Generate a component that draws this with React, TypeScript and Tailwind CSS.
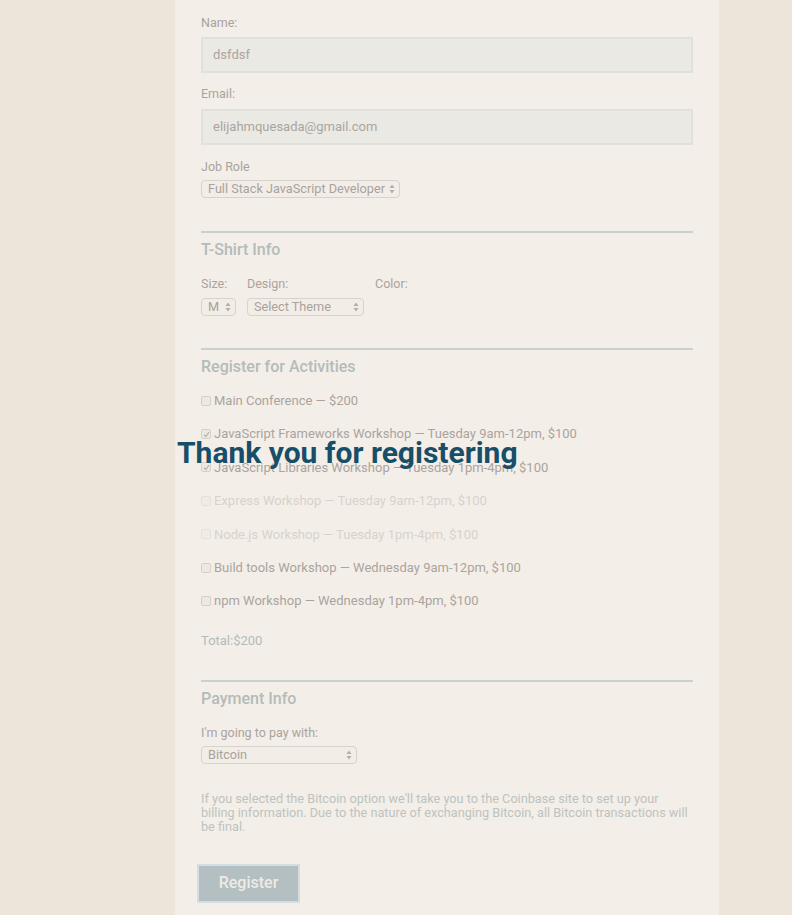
import React from "react";

const Arrows = () => (
  <svg width="6" height="10" viewBox="0 0 6 10" className="shrink-0">
    <path d="M3 0.5 L5.5 4 H0.5 Z" fill="#b5aea8" />
    <path d="M3 9.5 L5.5 6 H0.5 Z" fill="#b5aea8" />
  </svg>
);

const FakeSelect = ({ value, width }: { value: string; width: string }) => (
  <div
    className={`${width} h-[18px] flex items-center justify-between pl-[6px] pr-[4px] rounded-[4px] border border-[#d8d2cc] bg-[#f3ede7] text-[12.7px] text-[#a8a29d] leading-[16px] overflow-hidden`}
  >
    <span className="whitespace-nowrap">{value}</span>
    <Arrows />
  </div>
);

const Checkbox = ({ checked, faded }: { checked?: boolean; faded?: boolean }) => (
  <span
    className={`w-[10px] h-[10px] rounded-[2px] border flex items-center justify-center shrink-0 ${
      faded ? "border-[#e6e0da] bg-[#f1ebe5]" : "border-[#d6d0ca] bg-[#eee8e2]"
    }`}
  >
    {checked && (
      <svg width="7" height="7" viewBox="0 0 7 7">
        <path d="M1 3.8 L2.8 5.5 L6 1.2" stroke="#b8b2ad" strokeWidth="1.2" fill="none" />
      </svg>
    )}
  </span>
);

const activities = [
  { label: "Main Conference — $200" },
  { label: "JavaScript Frameworks Workshop — Tuesday 9am-12pm, $100", checked: true },
  { label: "JavaScript Libraries Workshop — Tuesday 1pm-4pm, $100", checked: true },
  { label: "Express Workshop — Tuesday 9am-12pm, $100", faded: true },
  { label: "Node.js Workshop — Tuesday 1pm-4pm, $100", faded: true },
  { label: "Build tools Workshop — Wednesday 9am-12pm, $100" },
  { label: "npm Workshop — Wednesday 1pm-4pm, $100" },
];

const SectionTitle = ({ children }: { children: React.ReactNode }) => (
  <div className="border-t-2 border-[#ccd0cc] pt-[7px]">
    <h2 className="text-[16px] leading-[20px] font-medium text-[#b2bcba]">{children}</h2>
  </div>
);

export default function App() {
  return (
    <div
      className="min-h-[915px] bg-[#ede5da] flex pl-[175px]"
      style={{ fontFamily: "Roboto, 'Liberation Sans', sans-serif" }}
    >
      <div className="relative w-[544px] bg-[#f4eee8] px-[26px] pt-[15px] pb-[14px]">
        <form className="flex flex-col">
          <label className="text-[12.5px] leading-[16px] text-[#a9a39e]">Name:</label>
          <div className="mt-[6px] h-[36px] border-2 border-[#e0e1dc] bg-[#ebe9e4] flex items-center px-[10px] text-[13px] text-[#aaa5a0]">
            dsfdsf
          </div>
          <label className="mt-[13px] text-[12.5px] leading-[16px] text-[#a9a39e]">Email:</label>
          <div className="mt-[7px] h-[36px] border-2 border-[#e0e1dc] bg-[#ebe9e4] flex items-center px-[10px] text-[13px] text-[#aaa5a0]">
            elijahmquesada@gmail.com
          </div>
          <label className="mt-[14px] text-[12.5px] leading-[16px] text-[#a9a39e]">Job Role</label>
          <div className="mt-[5px]">
            <FakeSelect value="Full Stack JavaScript Developer" width="w-[199px]" />
          </div>

          <div className="mt-[33px]">
            <SectionTitle>T-Shirt Info</SectionTitle>
          </div>
          <div className="mt-[16px] flex text-[12.5px] leading-[16px] text-[#a9a39e]">
            <div className="flex flex-col w-[46px]">
              <span>Size:</span>
              <div className="mt-[6px]">
                <FakeSelect value="M" width="w-[35px]" />
              </div>
            </div>
            <div className="flex flex-col w-[128px]">
              <span>Design:</span>
              <div className="mt-[6px]">
                <FakeSelect value="Select Theme" width="w-[117px]" />
              </div>
            </div>
            <div className="flex flex-col">
              <span>Color:</span>
            </div>
          </div>

          <div className="mt-[32px]">
            <SectionTitle>Register for Activities</SectionTitle>
          </div>
          <div className="mt-[7px] flex flex-col">
            {activities.map((a) => (
              <label
                key={a.label}
                className={`h-[33.4px] flex items-center gap-[3px] text-[13px] ${
                  a.faded ? "text-[#d8d2cc]" : "text-[#aaa49f]"
                }`}
              >
                <Checkbox checked={a.checked} faded={a.faded} />
                <span>{a.label}</span>
              </label>
            ))}
          </div>
          <p className="mt-[15px] text-[13px] leading-[16px] text-[#b1bcba]">Total:$200</p>

          <div className="mt-[31px]">
            <SectionTitle>Payment Info</SectionTitle>
          </div>
          <label className="mt-[16px] text-[12.5px] leading-[16px] text-[#a9a39e]">
            I'm going to pay with:
          </label>
          <div className="mt-[5px]">
            <FakeSelect value="Bitcoin" width="w-[156px]" />
          </div>
          <p className="mt-[28px] text-[12.7px] leading-[14px] text-[#bcc3c0]">
            If you selected the Bitcoin option we'll take you to the Coinbase site to set up your billing
            information. Due to the nature of exchanging Bitcoin, all Bitcoin transactions will be final.
          </p>
          <div className="mt-[30px] -ml-[4px]">
            <button
              type="button"
              className="w-[103px] h-[39px] border-2 border-[#d3dde4] bg-[#b3bfc0] text-[16px] text-[#eeebe6] font-medium"
            >
              Register
            </button>
          </div>
        </form>
        <h1 className="absolute left-[2px] top-[434px] text-[30px] leading-[38px] font-bold text-[#184e68]">
          Thank you for registering
        </h1>
      </div>
    </div>
  );
}
